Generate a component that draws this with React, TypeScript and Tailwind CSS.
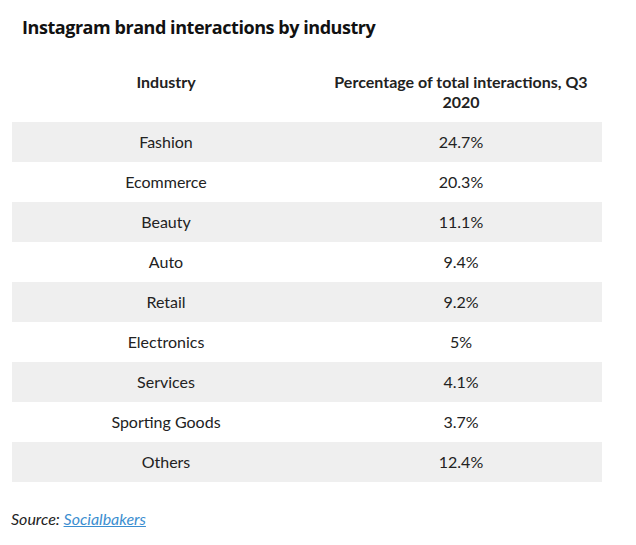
const rows = [
  { industry: 'Fashion', share: '24.7%' },
  { industry: 'Ecommerce', share: '20.3%' },
  { industry: 'Beauty', share: '11.1%' },
  { industry: 'Auto', share: '9.4%' },
  { industry: 'Retail', share: '9.2%' },
  { industry: 'Electronics', share: '5%' },
  { industry: 'Services', share: '4.1%' },
  { industry: 'Sporting Goods', share: '3.7%' },
  { industry: 'Others', share: '12.4%' },
];

export default function App() {
  return (
    <div className="min-h-[545px] w-[636px] bg-white font-['Lato',sans-serif] text-[#222]">
      <h2 className="pl-[22px] pt-[14px] font-['Open_Sans',sans-serif] text-[18px] leading-[26px] font-bold tracking-[-0.45px] text-[#111]">
        Instagram brand interactions by industry
      </h2>

      <table className="mt-[20px] ml-[12px] w-[590px] border-collapse text-[16px] leading-[20px]">
        <thead>
          <tr>
            <th className="w-[308px] px-[10px] pt-[12px] pb-[10px] align-top font-bold">Industry</th>
            <th className="px-[10px] pt-[12px] pb-[10px] align-top font-bold">
              Percentage of total interactions, Q3 2020
            </th>
          </tr>
        </thead>
        <tbody>
          {rows.map((r, i) => (
            <tr key={r.industry} className={i % 2 === 0 ? 'bg-[#efefef]' : 'bg-white'}>
              <td className="h-[40px] px-[10px] text-center">{r.industry}</td>
              <td className="h-[40px] px-[10px] text-center">{r.share}</td>
            </tr>
          ))}
        </tbody>
      </table>

      <p className="mt-[27px] pl-[11px] text-[16px] leading-[20px] italic">
        Source:{' '}
        <a href="#" className="text-[#3b8ed0] underline">
          Socialbakers
        </a>
      </p>
    </div>
  );
}
